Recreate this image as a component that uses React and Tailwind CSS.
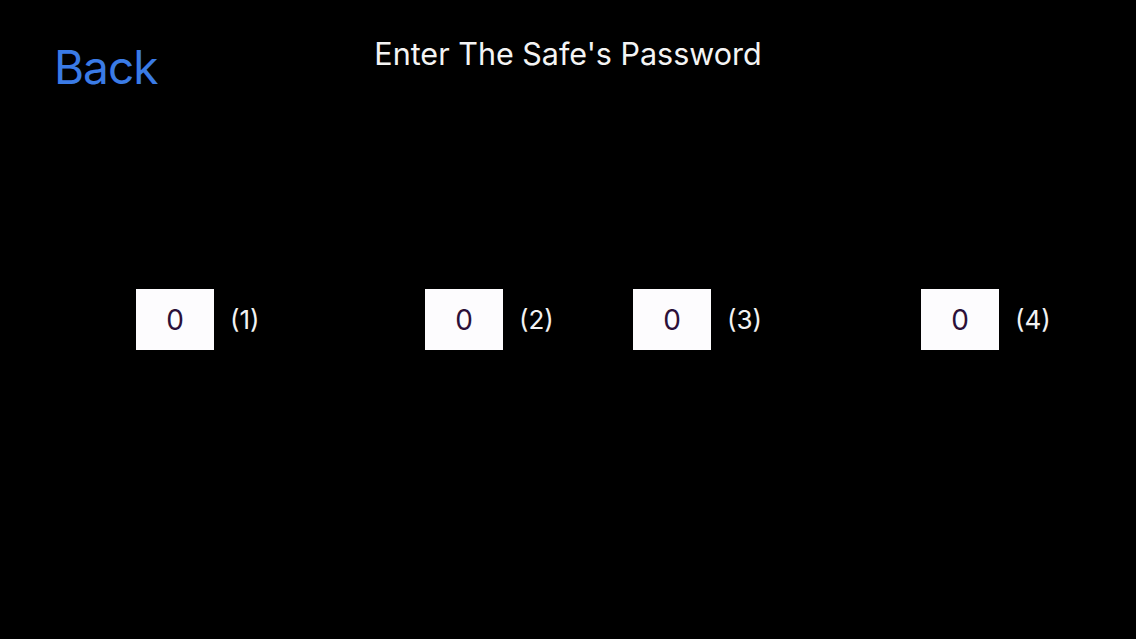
const digits = [
  { id: 1, value: 0, width: 'w-[289px]' },
  { id: 2, value: 0, width: 'w-[208px]' },
  { id: 3, value: 0, width: 'w-[288px]' },
  { id: 4, value: 0, width: 'w-auto' },
];

function DigitSlot({ id, value, width }) {
  return (
    <div className={`flex items-center gap-4 ${width}`}>
      <div className="flex h-[61px] w-[78px] items-center justify-center bg-[#fdfcfe] text-[28px] text-[#2c1038]">
        {value}
      </div>
      <span className="text-[26px] text-[#f2f2f2]">({id})</span>
    </div>
  );
}

export default function App() {
  return (
    <div
      className="h-[639px] w-[1136px] overflow-hidden bg-black"
      style={{ fontFamily: 'Inter, "Open Sans", sans-serif' }}
    >
      <header className="grid h-[90px] grid-cols-[1fr_auto_1fr] items-start">
        <button className="justify-self-start pl-[54px] pt-[44px] text-[46px] leading-none tracking-[-1px] text-[#3a7be6]">
          Back
        </button>
        <h1 className="pt-[39px] text-[30.5px] leading-none text-[#f4f4f4]">Enter The Safe's Password</h1>
        <div />
      </header>

      <section className="mt-[199px] flex pl-[136px]">
        {digits.map((d) => (
          <DigitSlot key={d.id} {...d} />
        ))}
      </section>
    </div>
  );
}
